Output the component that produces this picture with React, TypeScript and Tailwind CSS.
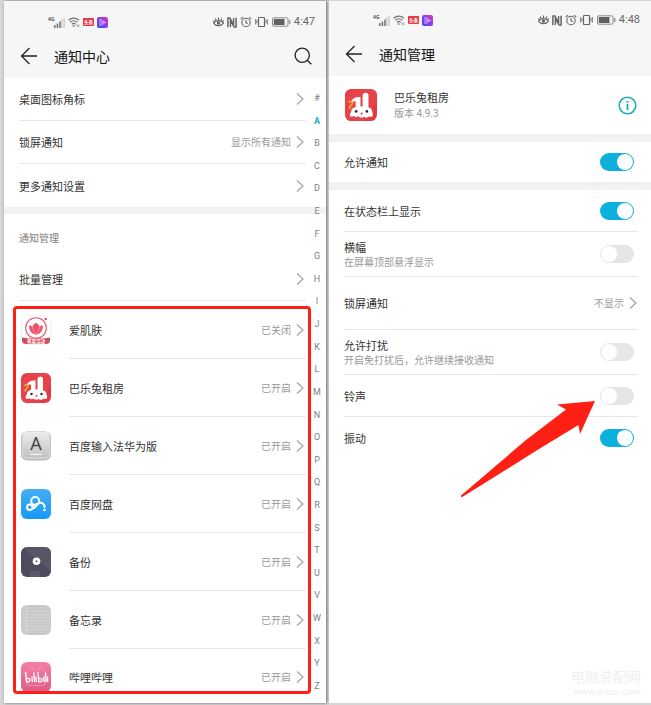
import { useState, type ReactNode } from 'react';

const INDEX_KEYS = '#ABCDEFGHIJKLMNOPQRSTUVWXYZ'.split('');

function Chevron() {
  return (
    <svg width="8" height="12" viewBox="0 0 8 12" fill="none" stroke="#a3a3a3" strokeWidth="1.2" className="shrink-0">
      <path d="M1 0.5 7 6 1 11.5" />
    </svg>
  );
}

function StatusBar({ time }: { time: string }) {
  return (
    <div className="flex h-6 items-center justify-between pr-[11px] pl-11 text-[#666]">
      <div className="flex items-center gap-[3px]">
        <svg width="17" height="13" viewBox="0 0 17 13">
          <text x="0" y="5" fontSize="5" fontWeight="700" fill="#555">4G</text>
          <path d="M6 9h1.6v3H6zM8.6 7.5h1.6V12H8.6zM11.2 5.5h1.6V12h-1.6z" fill="#777" />
          <path d="M13.4 3h1v9h-1zM15.6 2h1v10h-1z" fill="#bbb" />
        </svg>
        <svg width="12" height="12" viewBox="0 0 12 12" fill="none" stroke="#707070" strokeWidth="1.2">
          <path d="M.6 4.3C3.7 1.300 8 1.300 11 4.300M2.300 6.300c2-1.900 5-1.900 7 0M3.900 8.200c1.200-1 2.500-1 3.700 0" />
          <circle cx="5.600" cy="9.900" r=".9" fill="#707070" stroke="none" />
          <path d="M9 8.200v2.600M10.800 8.600v2.600" stroke="#888" strokeWidth=".8" />
        </svg>
        <svg width="11" height="8" viewBox="0 0 11 8">
          <rect width="11" height="8" rx="1" fill="#e8353f" />
          <text x="1" y="6" fontSize="4.600" fontWeight="700" fill="#fff">头条</text>
        </svg>
        <svg width="11" height="11" viewBox="0 0 11 11">
          <defs>
            <linearGradient id="play-bg" x1="0" y1="1" x2="1" y2="0">
              <stop offset="0" stopColor="#3a4be8" />
              <stop offset=".5" stopColor="#8b3bea" />
              <stop offset="1" stopColor="#e23ab8" />
            </linearGradient>
          </defs>
          <rect width="11" height="11" rx="2" fill="url(#play-bg)" />
          <path d="M3 2.200 8.600 5.500 3 8.800zM4.800 4.400v2.200l1.800-1.100z" fill="none" stroke="#d9c5ff" strokeWidth=".8" strokeLinejoin="round" />
        </svg>
      </div>
      <div className="flex items-center gap-[3px]">
        <svg width="11" height="12" viewBox="0 0 11 12" fill="none" stroke="currentColor" strokeWidth="1.2">
          <path d="M.5 7.200C3 3.800 8 3.800 10.500 7.200 8 10.500 3 10.500.5 7.200zM5.500 1.500v2.600M2.200 2.600l1 2M8.800 2.600 7.800 4.600M.3 4.400l1.200 1.200M10.700 4.400 9.500 5.600" />
          <circle cx="5.500" cy="7" r="1.700" fill="currentColor" stroke="none" />
        </svg>
        <svg width="10" height="11" viewBox="0 0 10 11" fill="none" stroke="currentColor">
          <path d="M.9.600v9.600M9.100.800v9.600" strokeWidth="1.500" />
          <path d="M.9 1h2L6.600 7.500V1M9.100 10h-2L3.400 3.500V10" strokeWidth="1.400" />
        </svg>
        <svg width="12" height="12" viewBox="0 0 12 12" fill="none" stroke="currentColor" strokeWidth="1.1">
          <circle cx="6" cy="6.500" r="4.200" />
          <path d="M6 4v2.700l1.700 1M.7 3.200 3 1.200M11.300 3.200 9 1.200" />
        </svg>
        <svg width="13" height="12" viewBox="0 0 13 12" fill="none" stroke="currentColor" strokeWidth="1.2">
          <rect x="3.500" y="1.500" width="6" height="9" rx=".6" />
          <path d="M.7 3v5.500M12.300 3v5.500M2 4.200v3M11 4.200v3" strokeWidth=".9" />
        </svg>
        <svg width="20" height="10" viewBox="0 0 20 10">
          <rect x="1.500" y=".8" width="15.500" height="8.400" rx="1.200" fill="none" stroke="#8a8a8a" />
          <rect x="2.800" y="2" width="10.700" height="6" fill="#606060" />
          <path d="M18.300 3h1v4h-1z" fill="#777" />
        </svg>
        <span className="text-[11px] leading-3 font-['Roboto',sans-serif]">{time}</span>
      </div>
    </div>
  );
}

function TitleBar({ title, children }: { title: string; children?: ReactNode }) {
  return (
    <div className="flex h-11 items-center pr-[14px] pl-4">
      <button type="button" aria-label="返回" className="shrink-0">
        <svg width="18" height="18" viewBox="0 0 18 18" fill="none" stroke="#222" strokeWidth="1.3">
          <path d="M17 9H1.500M9.500 1 1.500 9l8 8" />
        </svg>
      </button>
      <h1 className="ml-4 flex-1 text-[14px] leading-5 text-[#111]">{title}</h1>
      {children}
    </div>
  );
}

function RabbitIcon({ className }: { className: string }) {
  return (
    <svg viewBox="0 0 30 30" className={className}>
      <rect width="30" height="30" rx="6" fill="#e33b42" />
      <path d="M0 8 8 0h16a6 6 0 0 1 6 6v5L18 30H6a6 6 0 0 1-6-6z" fill="#ec4c50" opacity=".5" />
      <path d="M5.500 12.500C7 8.500 10 7 14.500 7.500V19H10v-7.500c-1.700 0-3 .6-4.500 1z" fill="#fff" />
      <path d="M16.500 19V6c0-3.400 5.500-3.400 5.500 0v13z" fill="#fff" />
      <path d="M6 20.500c0-2.500 3-4 9.500-4s10 1.500 10 4.500c0 1.500 1 2 .6 3.600-.3 1.600-2.500 1.900-3.600.9-1 1.700-3.700 1.700-4.700.5-1.500 1.200-4.300 1-5.300-.4-1.300 1-3.300.9-4.300-.3C6.500 26.400 4.500 26 4.500 24.300c0-1.300 1.500-2 1.500-3.800z" fill="#fff" />
      <path d="M4 17.500 6.500 14M3.700 12.500c2-2 4.500-.5 3 1.500s-3 3-2 4" fill="none" stroke="#f0b23e" strokeWidth="1.4" strokeLinecap="round" />
      <circle cx="10.500" cy="21" r="1.200" fill="#2d2327" />
      <circle cx="20.500" cy="21" r="1.200" fill="#2d2327" />
      <path d="M14.300 22.300h2.600l-1.300 2.200z" fill="#e8454b" />
    </svg>
  );
}

function SkinIcon() {
  return (
    <svg viewBox="0 0 30 30" className="size-[30px]">
      <rect x=".5" y=".5" width="29" height="29" rx="5.500" fill="#fff" stroke="#f2f2f2" />
      <circle cx="15" cy="13" r="10.300" fill="#fff" stroke="#e6506a" strokeWidth="1.1" />
      <path d="M8 10.500c1.500-.2 2.700.5 3.500 1.300.3-1.400 1.300-2.700 3.500-4 2.200 1.300 3.200 2.600 3.500 4 .8-.8 2-1.500 3.500-1.300 0 5-2.500 8.700-7 9.200-4.500-.5-7-4.200-7-9.200z" fill="#f0546c" />
      <path d="M11.500 11.800c.3 3 1.500 5.400 3.500 7.900 2-2.500 3.200-4.900 3.500-7.900" fill="none" stroke="#ff9aaa" strokeWidth=".8" />
      <circle cx="24.700" cy="4" r="1.200" fill="#dc4060" />
      <path d="M1 22.500c9 1.600 19 1.600 28 0v3a4 4 0 0 1-4 3.500H5a4 4 0 0 1-4-3.500z" fill="#d94c5e" />
      <path d="M1.500 23.500 4 24v4l-2.500-2zM28.500 23.500 26 24v4l2.500-2z" fill="#8b6a5c" />
      <text x="15" y="27.800" textAnchor="middle" fontSize="4.500" fontWeight="700" fill="#fff">有奖活动</text>
    </svg>
  );
}

function KeyboardIcon() {
  return (
    <svg viewBox="0 0 30 30" className="size-[30px]">
      <defs>
        <linearGradient id="key-bg" x1="0" y1="0" x2="0" y2="1">
          <stop offset="0" stopColor="#ededed" />
          <stop offset="1" stopColor="#c2c2c2" />
        </linearGradient>
      </defs>
      <rect y=".5" width="30" height="29" rx="6" fill="#b9b9b9" />
      <rect x=".6" y=".5" width="28.800" height="27.500" rx="5.500" fill="#d6d6d6" />
      <rect x="2" y="1" width="26" height="25.500" rx="4" fill="url(#key-bg)" />
      <text x="15" y="19" textAnchor="middle" fontSize="18" fill="#454545" className="font-['Noto_Sans',sans-serif]">A</text>
      <path d="M9 23.300h12" stroke="#fff" strokeWidth="1" />
    </svg>
  );
}

function NetdiskIcon() {
  return (
    <svg viewBox="0 0 30 30" className="size-[30px]">
      <defs>
        <linearGradient id="disk-bg" x1="0" y1="0" x2="0" y2="1">
          <stop offset="0" stopColor="#45adf2" />
          <stop offset="1" stopColor="#159af6" />
        </linearGradient>
      </defs>
      <rect width="30" height="30" rx="6" fill="url(#disk-bg)" />
      <g fill="none" stroke="#fff" strokeWidth="2" strokeLinecap="round">
        <circle cx="8.800" cy="18.200" r="2.800" />
        <circle cx="14.200" cy="12" r="4" />
        <path d="M11.300 16.800 16.800 14.800M11.500 19.500c2.200-.2 3.600-2.400 5-4 2-2.200 5.200-2.400 6.600.4.400.9.500 1.500.4 2.300" />
      </g>
      <circle cx="23.500" cy="21" r="1.200" fill="#fff" />
    </svg>
  );
}

function BackupIcon() {
  return (
    <svg viewBox="0 0 30 30" className="size-[30px]">
      <rect width="30" height="30" rx="6" fill="#4d4c5d" />
      <path d="M6 0h18a6 6 0 0 1 6 6v18L4 2.500z" fill="#5c5a6c" opacity=".7" />
      <path d="M9 24h10v6H9z" fill="#5a5969" />
      <circle cx="15.500" cy="14.300" r="3.800" fill="#fff" />
      <circle cx="15.500" cy="14.300" r="1.100" fill="#6b6a7b" />
    </svg>
  );
}

function MemoIcon() {
  return (
    <svg viewBox="0 0 30 30" className="size-[30px]">
      <rect width="30" height="30" rx="6" fill="#c9c9c9" />
      <path d="M1 6.500h28M1 9.500h28M1 12.500h28M1 15.500h28M1 18.500h28M1 21.500h28M1 24.500h28" stroke="#d4d4d4" strokeWidth=".8" />
      <path d="M5.500 0v30" stroke="#d9d9d9" strokeWidth=".8" />
    </svg>
  );
}

function BiliIcon() {
  return (
    <svg viewBox="0 0 30 30" className="size-[30px]">
      <defs>
        <linearGradient id="bili-bg" x1="0" y1="0" x2="0" y2="1">
          <stop offset="0" stopColor="#f77fa6" />
          <stop offset="1" stopColor="#dc5c8a" />
        </linearGradient>
      </defs>
      <rect width="30" height="30" rx="6" fill="url(#bili-bg)" />
      <path d="m10 4 3 4M20 4l-3 4" stroke="#f394b4" strokeWidth="1.2" />
      <rect x="6" y="7.500" width="18" height="16" rx="3" fill="none" stroke="#f08bae" strokeWidth="1.2" />
      <g fill="none" stroke="#fff" strokeWidth="1.3" strokeLinecap="round" strokeLinejoin="round">
        <path d="M4.500 10.500l1 9.300c2.600.2 3.700-.6 3.600-2-.1-1.200-1.500-1.600-3.400-1.200M11 15l.3 4.500M12.900 11l.6 8.500M15 15l.2 4.500" />
        <path d="M17 10.500l.8 9.300c2.400.2 3.400-.6 3.300-2-.1-1.200-1.400-1.600-3.200-1.200M22.800 15l.3 4.500M24.600 11l.5 8.500M26.600 15l.1 4.500" />
      </g>
    </svg>
  );
}

const APPS = [
  { name: '爱肌肤', status: '已关闭', icon: <SkinIcon /> },
  { name: '巴乐兔租房', status: '已开启', icon: <RabbitIcon className="size-[30px]" /> },
  { name: '百度输入法华为版', status: '已开启', icon: <KeyboardIcon /> },
  { name: '百度网盘', status: '已开启', icon: <NetdiskIcon /> },
  { name: '备份', status: '已开启', icon: <BackupIcon /> },
  { name: '备忘录', status: '已开启', icon: <MemoIcon /> },
  { name: '哔哩哔哩', status: '已开启', icon: <BiliIcon /> },
];

function LinkRow({ label, value, border = true }: { label: string; value?: string; border?: boolean }) {
  return (
    <button
      type="button"
      className={`flex h-[43px] w-full items-center gap-[5px] pr-[2px] text-left ${border ? 'border-b border-[#e6e6e6]' : ''}`}
    >
      <span className="flex-1 text-[11px] leading-4 text-[#333]">{label}</span>
      {value && <span className="text-[10px] leading-4 text-[#999]">{value}</span>}
      <Chevron />
    </button>
  );
}

function NotificationCenter() {
  return (
    <section className="flex flex-col bg-white shadow-[1px_0_3px_rgba(0,0,0,0.5)]">
      <header className="bg-[#f6f6f6] pt-[9px]">
        <StatusBar time="4:47" />
        <TitleBar title="通知中心">
          <button type="button" aria-label="搜索">
            <svg width="18" height="18" viewBox="0 0 19 19" fill="none" stroke="#222" strokeWidth="1.4">
              <circle cx="8.700" cy="8.700" r="7.500" />
              <path d="m14 14 4.300 4.300" />
            </svg>
          </button>
        </TitleBar>
      </header>

      <div className="relative flex-1">
        <div className="pr-5 pl-[15px]">
          <LinkRow label="桌面图标角标" />
          <LinkRow label="锁屏通知" value="显示所有通知" />
          <LinkRow label="更多通知设置" border={false} />
        </div>
        <div className="h-[7px] bg-[#f2f2f2]" />
        <div className="pr-5 pl-[15px]">
          <h2 className="flex h-[44px] items-center pt-1 text-[10px] leading-4 text-[#808080]">通知管理</h2>
          <LinkRow label="批量管理" />
        </div>

        <div className="relative pr-5 pl-[17px]">
          <ul>
            {APPS.map(app => (
              <li key={app.name} className="group">
                <button type="button" className="flex h-[58px] w-full items-center gap-[18px] text-left group-last:h-[54px] group-last:pt-[2px]">
                  <span className="shrink-0">{app.icon}</span>
                  <span className="flex flex-1 items-center gap-[5px] self-stretch border-b border-[#e6e6e6] pr-[2px] group-last:border-0">
                    <span className="flex-1 text-[11px] leading-4 text-[#333]">{app.name}</span>
                    <span className="text-[10px] leading-4 text-[#999]">{app.status}</span>
                    <Chevron />
                  </span>
                </button>
              </li>
            ))}
          </ul>
          <div className="pointer-events-none absolute top-[5px] right-[15px] bottom-[9px] left-[9px] rounded-[4px] border-3 border-[#ff2015]" />
        </div>

        <nav aria-label="索引" className="absolute top-[14px] right-[2px] bottom-[11px] flex w-[14px] flex-col items-center justify-between">
          {INDEX_KEYS.map(key => (
            <a
              key={key}
              href={`#${key}`}
              className={`text-[9px] leading-3 font-['Roboto',sans-serif] ${key === 'A' ? 'font-bold text-[#1bb0c4]' : 'text-[#808080]'}`}
            >
              {key}
            </a>
          ))}
        </nav>
      </div>
    </section>
  );
}

function ToggleRow({ label, hint, initial = false, className }: { label: string; hint?: string; initial?: boolean; className: string }) {
  const [on, setOn] = useState(initial);

  return (
    <label className={`flex items-center justify-between pr-1 ${className}`}>
      <span>
        <span className="block text-[11px] leading-4 text-[#333]">{label}</span>
        {hint && <span className="block text-[10px] leading-[14px] text-[#999]">{hint}</span>}
      </span>
      <input
        type="checkbox"
        role="switch"
        checked={on}
        onChange={e => setOn(e.target.checked)}
        className="flex h-[18px] w-[34px] shrink-0 cursor-pointer appearance-none items-center rounded-full bg-[#e6e6e6] px-px before:size-4 before:rounded-full before:bg-white checked:justify-end checked:bg-[#0bb0dc]"
      />
    </label>
  );
}

function AppNotification() {
  return (
    <section className="relative bg-white">
      <header className="bg-[#f6f6f6] pt-[7px]">
        <StatusBar time="4:48" />
        <TitleBar title="通知管理" />
      </header>

      <div className="flex h-[58px] items-center pr-[14px] pl-4">
        <RabbitIcon className="size-8 shrink-0" />
        <div className="ml-[17px] flex-1">
          <p className="text-[11px] leading-4 text-[#333]">巴乐兔租房</p>
          <p className="mt-px text-[10px] leading-4 text-[#999] font-['Roboto','Noto_Sans_CJK_SC',sans-serif]">版本 4.9.3</p>
        </div>
        <button type="button" aria-label="应用信息">
          <svg width="19" height="19" viewBox="0 0 19 19" fill="none" stroke="#1aabb8" strokeWidth="1.5">
            <circle cx="9.500" cy="9.500" r="8.300" />
            <path d="M9.500 8v6M9.500 5v1.800" strokeWidth="1.800" />
          </svg>
        </button>
      </div>

      <div className="h-2 bg-[#f2f2f2]" />
      <div className="pr-[13px] pl-[15px]">
        <ToggleRow label="允许通知" initial className="h-10" />
      </div>
      <div className="h-2 bg-[#f2f2f2]" />

      <div className="divide-y divide-[#e6e6e6] pr-[13px] pl-[15px]">
        <ToggleRow label="在状态栏上显示" initial className="h-[42px]" />
        <ToggleRow label="横幅" hint="在屏幕顶部悬浮显示" className="h-[45px]" />
        <button type="button" className="flex h-[53px] w-full items-center gap-[5px] pr-px text-left">
          <span className="flex-1 text-[11px] leading-4 text-[#333]">锁屏通知</span>
          <span className="text-[10px] leading-4 text-[#999]">不显示</span>
          <Chevron />
        </button>
        <ToggleRow label="允许打扰" hint="开启免打扰后，允许继续接收通知" className="h-[45px]" />
        <div className="relative">
          <ToggleRow label="铃声" className="h-[41px]" />
          <svg width="136" height="98" viewBox="0 0 136 98" className="pointer-events-none absolute top-[25px] right-[42px] z-10">
            <path d="M135 1 97 4.500l9 5L66 40 1 95.500 1.500 97.500 79 49l39.500-24 1.500 9z" fill="#ff2015" />
          </svg>
        </div>
        <ToggleRow label="振动" initial className="h-[41px]" />
      </div>

      <div className="absolute right-[10px] bottom-[5px] text-right text-[#f0f0f0]">
        <p className="text-[14px] leading-5">电脑装配网</p>
        <p className="text-[9px] leading-3 font-['DejaVu_Sans',sans-serif]">www.dnzp.com</p>
      </div>
    </section>
  );
}

export default function App() {
  return (
    <main className="grid min-h-screen grid-cols-2 gap-[3px] bg-[#d6d6d6] pt-px pb-0.5 pl-1 font-['Noto_Sans_CJK_SC',sans-serif]">
      <NotificationCenter />
      <AppNotification />
    </main>
  );
}
